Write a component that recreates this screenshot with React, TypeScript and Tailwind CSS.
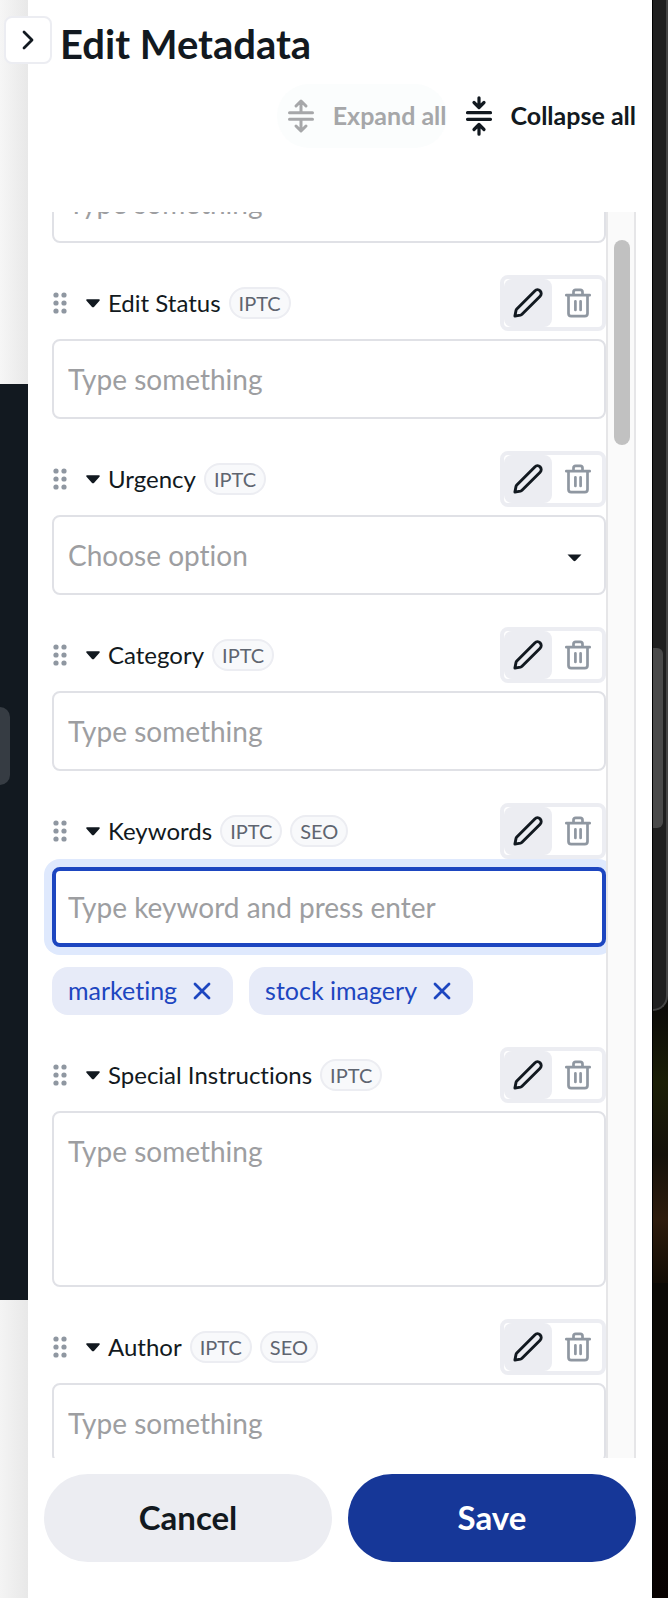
import { useLayoutEffect, useRef } from "react";

type Kind = "text" | "select" | "textarea" | "keywords";

interface Field {
  label: string;
  tags: string[];
  kind: Kind;
}

const FIELDS: Field[] = [
  { label: "Edit Status", tags: ["IPTC"], kind: "text" },
  { label: "Urgency", tags: ["IPTC"], kind: "select" },
  { label: "Category", tags: ["IPTC"], kind: "text" },
  { label: "Keywords", tags: ["IPTC", "SEO"], kind: "keywords" },
  { label: "Special Instructions", tags: ["IPTC"], kind: "textarea" },
  { label: "Author", tags: ["IPTC", "SEO"], kind: "text" },
];

const KEYWORDS = ["marketing", "stock imagery"];

const BOX =
  "block w-full rounded-lg border-2 border-[#e0e1e6] bg-white px-3.5 text-[28px] leading-9 placeholder:text-[#9d9ea1] outline-none";

function ExpandIcon() {
  return (
    <svg width="32" height="40" viewBox="0 0 32 40" fill="none" stroke="currentColor" strokeWidth="3" strokeLinecap="round" strokeLinejoin="round" aria-hidden="true">
      <path d="M4.5 16.7h23M4.5 23.3h23M16 16V6M11 10l5-5 5 5M16 24v10M11 30l5 5 5-5" />
    </svg>
  );
}

function CollapseIcon() {
  return (
    <svg width="32" height="40" viewBox="0 0 32 40" fill="none" stroke="currentColor" strokeWidth="3.2" strokeLinecap="round" strokeLinejoin="round" aria-hidden="true">
      <path d="M4.5 16.7h23M4.5 23.3h23M16 1.8v9M11 6.500l5 5 5-5M16 38.2v-9M11 33.500l5-5 5 5" />
    </svg>
  );
}

function DragIcon() {
  return (
    <svg width="16" height="24" viewBox="0 0 16 24" fill="#8f97a1" aria-hidden="true">
      {[4, 12, 20].map((y) => (
        <g key={y}>
          <circle cx="4" cy={y} r="2.6" />
          <circle cx="12" cy={y} r="2.6" />
        </g>
      ))}
    </svg>
  );
}

function Caret() {
  return (
    <svg width="14" height="10" viewBox="0 0 14 10" fill="#121920" aria-hidden="true">
      <path d="M1 1.300h12c.8 0 1.1.9.5 1.500L8.200 8.700c-.7.8-1.700.8-2.400 0L.5 2.800C-.1 2.200.2 1.300 1 1.300Z" />
    </svg>
  );
}

function PencilIcon() {
  return (
    <svg width="32" height="32" viewBox="0 0 32 32" fill="none" stroke="#121920" strokeWidth="2.9" strokeLinecap="round" strokeLinejoin="round" aria-hidden="true">
      <path d="M2.900 29.100l1.100-5.600a3 3 0 0 1 .8-1.500L22.800 3.900a3.700 3.700 0 0 1 5.300 5.300L10 27.300a3 3 0 0 1-1.500.8Z" />
    </svg>
  );
}

function TrashIcon() {
  return (
    <svg width="32" height="32" viewBox="0 0 32 32" fill="none" stroke="#8f97a1" strokeWidth="2.700" strokeLinecap="round" strokeLinejoin="round" aria-hidden="true">
      <path d="M4.300 8.200h23.400M6.500 8.500v18a2.700 2.700 0 0 0 2.700 2.700h13.600a2.700 2.700 0 0 0 2.700-2.700v-18M11.500 7.500V5a2.200 2.200 0 0 1 2.200-2.200h4.600A2.200 2.200 0 0 1 20.500 5v2.500M13.400 14.300v8.600M18.600 14.300v8.600" />
    </svg>
  );
}

function FieldControl({ kind, id }: { kind: Kind; id: string }) {
  if (kind === "select") {
    return (
      <div className="relative">
        <select id={id} defaultValue="" className={`${BOX} h-20 appearance-none text-[#9d9ea1]`}>
          <option value="">Choose option</option>
        </select>
        <svg className="pointer-events-none absolute top-9 right-6" width="15" height="12" viewBox="0 0 15 12" fill="#121920" aria-hidden="true">
          <path d="M.5 3.500h14L8.500 9.700q-1 .9-2 0Z" />
        </svg>
      </div>
    );
  }
  if (kind === "textarea") {
    return <textarea id={id} placeholder="Type something" className={`${BOX} h-44 resize-none py-5`} />;
  }
  if (kind === "keywords") {
    return (
      <>
        <input
          id={id}
          type="text"
          placeholder="Type keyword and press enter"
          className="block h-20 w-full rounded-lg border-4 border-[#1d46c0] bg-white px-3 text-[28px] leading-9 ring-8 ring-[#dfe9fd] outline-none placeholder:text-[#9d9ea1]"
        />
        <ul className="mt-5 flex gap-4">
          {KEYWORDS.map((word) => (
            <li key={word} className="flex h-12 items-center gap-4 rounded-2xl bg-[#e7ebf8] pr-[22px] pl-4 text-[25px] text-[#1d46c0]">
              {word}
              <button type="button" aria-label={`Remove ${word}`}>
                <svg width="18" height="18" viewBox="0 0 18 18" fill="none" stroke="currentColor" strokeWidth="2.800" strokeLinecap="round" aria-hidden="true">
                  <path d="M2 2l14 14M16 2L2 16" />
                </svg>
              </button>
            </li>
          ))}
        </ul>
      </>
    );
  }
  return <input id={id} type="text" placeholder="Type something" className={`${BOX} h-20`} />;
}

function FieldRow({ field }: { field: Field }) {
  const id = field.label.toLowerCase().replace(/ /g, "-");
  return (
    <div>
      <div className="mb-2 flex h-14 items-center">
        <button type="button" aria-label={`Move ${field.label}`} className="cursor-grab">
          <DragIcon />
        </button>
        <button type="button" aria-label={`Toggle ${field.label}`} className="mr-2 ml-4 flex h-6 w-4 items-center justify-end">
          <Caret />
        </button>
        <label htmlFor={id} className="text-2xl">
          {field.label}
        </label>
        {field.tags.map((tag) => (
          <span key={tag} className="ml-2 flex h-8 items-center rounded-full border-2 border-[#ecedf2] bg-[#f8f9fb] px-2 text-xl text-[#5f6570]">
            {tag}
          </span>
        ))}
        <div className="ml-auto flex gap-0.5 rounded-lg border-4 border-[#ecedf2] bg-white">
          <button type="button" aria-label={`Edit ${field.label}`} className="flex size-12 items-center justify-center rounded-lg bg-[#ecedf2]">
            <PencilIcon />
          </button>
          <button type="button" aria-label={`Delete ${field.label}`} className="flex size-12 items-center justify-center rounded-lg">
            <TrashIcon />
          </button>
        </div>
      </div>
      <FieldControl kind={field.kind} id={id} />
    </div>
  );
}

export default function App() {
  const list = useRef<HTMLDivElement>(null);

  useLayoutEffect(() => {
    if (list.current) list.current.scrollTop = 49;
  }, []);

  return (
    <div className="flex h-screen overflow-hidden bg-white font-['Lato',sans-serif] text-[#121920] [font-variant-ligatures:none]">
      <aside className="flex w-7 shrink-0 flex-col">
        <div className="h-96 bg-linear-to-r from-[#f6f6f6] to-[#e8e8e8]" />
        <div className="flex h-[916px] items-center bg-[#121920]">
          <div className="mb-48 h-[78px] w-2.5 rounded-r-xl bg-[#363c43]" />
        </div>
        <div className="flex-1 bg-linear-to-r from-[#f4f4f4] to-[#e8e8e8]" />
      </aside>

      <main className="relative flex min-w-0 flex-1 flex-col px-4 pb-9">
        <button
          type="button"
          aria-label="Close panel"
          className="absolute top-4 -left-6 flex size-12 items-center justify-center rounded-lg border-2 border-[#ecedf2] bg-white"
        >
          <svg width="14" height="22" viewBox="0 0 14 22" fill="none" stroke="currentColor" strokeWidth="2.800" strokeLinecap="round" strokeLinejoin="round" aria-hidden="true">
            <path d="M3 3l8 8-8 8" />
          </svg>
        </button>
        <h1 className="mt-5 pl-4 text-[40px] leading-[48px] font-bold">Edit Metadata</h1>
        <div className="mt-4 mb-16 flex justify-end gap-2 text-[25px] font-bold">
          <button type="button" disabled className="flex h-16 items-center gap-4 rounded-full bg-[#fbfdfd] pl-2 text-[#a6a7a9]">
            <ExpandIcon />
            Expand all
          </button>
          <button type="button" className="flex h-16 items-center gap-4 rounded-full pl-2">
            <CollapseIcon />
            Collapse all
          </button>
        </div>

        <div className="flex min-h-0 flex-1">
          <div ref={list} className="flex min-w-0 flex-1 flex-col gap-8 overflow-x-hidden overflow-y-auto pl-2 [scrollbar-width:none]">
            <input type="text" aria-label="Text" placeholder="Type something" className={`${BOX} h-20 shrink-0`} />
            {FIELDS.map((field) => (
              <FieldRow key={field.label} field={field} />
            ))}
          </div>
          <div className="w-[30px] shrink-0 border-x-2 border-[#e6e6e8] bg-[#fafafa] pt-7 pr-1 pl-1.5">
            <div className="h-[205px] rounded-full bg-[#c1c1c1]" />
          </div>
        </div>

        <div className="mt-4 grid grid-cols-2 gap-4 text-[33px] font-bold">
          <button type="button" className="h-[88px] rounded-full bg-[#ecedf2]">
            Cancel
          </button>
          <button type="button" className="h-[88px] rounded-full bg-[#163798] text-white">
            Save
          </button>
        </div>
      </main>

      <aside className="flex w-4 shrink-0 flex-col border-l border-black bg-black">
        <div className="bg-[#0d0c08]">
          <div className="h-[1011px] rounded-br-2xl border-r-2 border-b-2 border-[#444444] bg-[#202020] pt-[648px]">
            <div className="h-[180px] w-2.5 rounded-r-md bg-[#4a4a4a]" />
          </div>
        </div>
        <div className="h-36 bg-linear-to-b from-[#0d0c08] via-[#1b1e06] to-[#15110a]" />
        <div className="h-32 bg-linear-to-b from-[#15110a] via-[#2e1c0d] to-[#120c05]" />
        <div className="flex-1 bg-linear-to-b from-[#0b0905] via-[#0b0907] to-[#080201]" />
      </aside>
    </div>
  );
}
